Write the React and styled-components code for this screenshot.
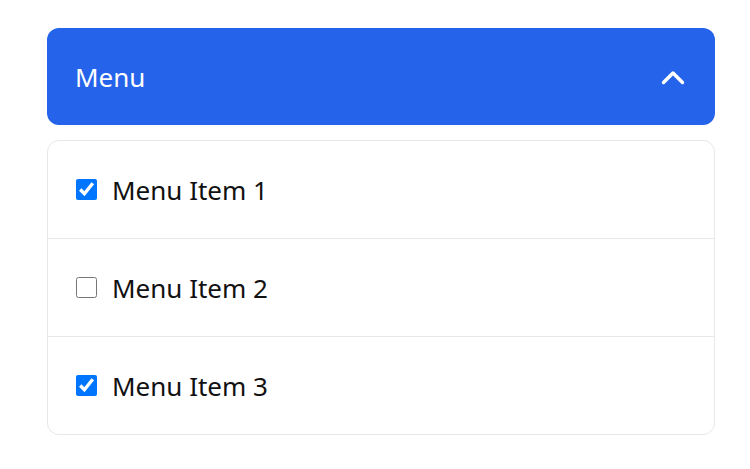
import React, { useState } from 'react';
import styled, { createGlobalStyle } from 'styled-components';

const GlobalStyle = createGlobalStyle`
  html, body {
    margin: 0;
    padding: 0;
    background: #ffffff;
  }
  body {
    font-family: 'Noto Sans', 'Open Sans', sans-serif;
  }
`;

const Page = styled.div`
  padding: 28px 0 0 47px;
`;

const Accordion = styled.div`
  width: 668px;
  display: flex;
  flex-direction: column;
  gap: 15px;
`;

const Header = styled.button`
  display: flex;
  align-items: center;
  justify-content: space-between;
  height: 97px;
  padding: 0 29px 0 28px;
  border: none;
  border-radius: 12px;
  background: #2563eb;
  color: #ffffff;
  font-family: inherit;
  font-size: 26px;
  cursor: pointer;
  text-align: left;
`;

const Chevron = styled.svg`
  width: 26px;
  height: 18px;
  transform: ${(p) => (p.$open ? 'none' : 'rotate(180deg)')};
`;

const List = styled.ul`
  list-style: none;
  margin: 0;
  padding: 0;
  border: 1px solid #e5e7eb;
  border-radius: 12px;
  overflow: hidden;
`;

const Row = styled.li`
  display: flex;
  align-items: center;
  gap: 15px;
  height: 98px;
  box-sizing: border-box;
  padding: 0 28px;
  border-bottom: 1px solid #e5e7eb;
  color: #111111;
  font-size: 26px;

  &:last-child {
    height: 97px;
    border-bottom: none;
  }
`;

const Check = styled.input`
  width: 21px;
  height: 21px;
  margin: 0;
  accent-color: #0075ff;
`;

const initial = [
  { id: 1, label: 'Menu Item 1', checked: true },
  { id: 2, label: 'Menu Item 2', checked: false },
  { id: 3, label: 'Menu Item 3', checked: true },
];

export default function App() {
  const [open, setOpen] = useState(true);
  const [items, setItems] = useState(initial);

  const toggle = (id) => {
    setItems(items.map((it) => (it.id === id ? { ...it, checked: !it.checked } : it)));
  };

  return (
    <Page>
      <GlobalStyle />
      <Accordion>
        <Header type="button" onClick={() => setOpen(!open)}>
          <span>Menu</span>
          <Chevron $open={open} viewBox="0 0 26 18" fill="none">
            <polyline
              points="3.5,14.5 13,5 22.5,14.5"
              stroke="#ffffff"
              strokeWidth="3.5"
              strokeLinecap="round"
              strokeLinejoin="round"
            />
          </Chevron>
        </Header>
        {open && (
          <List>
            {items.map((it) => (
              <Row key={it.id}>
                <Check type="checkbox" checked={it.checked} onChange={() => toggle(it.id)} />
                <span>{it.label}</span>
              </Row>
            ))}
          </List>
        )}
      </Accordion>
    </Page>
  );
}
